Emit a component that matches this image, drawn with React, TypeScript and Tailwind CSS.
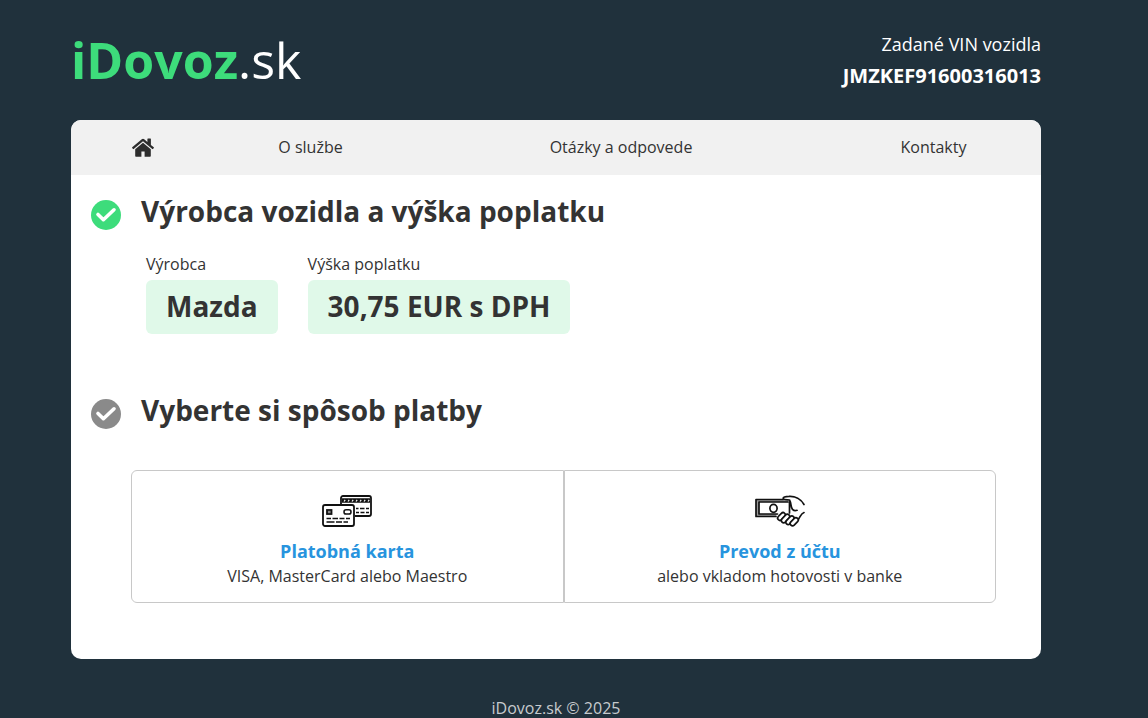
const navLinks = ['O službe', 'Otázky a odpovede', 'Kontakty'];

const vehicle = [
  { label: 'Výrobca', value: 'Mazda' },
  { label: 'Výška poplatku', value: '30,75 EUR s DPH' },
];

const payments = [
  {
    title: 'Platobná karta',
    text: 'VISA, MasterCard alebo Maestro',
    icon: CardsIcon,
    shape: 'rounded-l-md',
  },
  {
    title: 'Prevod z účtu',
    text: 'alebo vkladom hotovosti v banke',
    icon: CashIcon,
    shape: 'rounded-r-md',
  },
];

export default function App() {
  return (
    <div className="min-h-screen bg-[#20313c] pr-9 text-base text-[#333] font-['Open_Sans','Noto_Sans',sans-serif]">
      <div className="max-w-[970px] mx-auto">
        {/* Header */}
        <header className="flex justify-between text-white pt-7 pb-7">
          <a href="#" className="text-[50px] leading-[64px]">
            <span className="font-bold text-[#3ddc7b]">iDovoz</span>.sk
          </a>
          <div className="text-right">
            <p className="text-lg leading-8">Zadané VIN vozidla</p>
            <p className="text-xl leading-8 font-bold">JMZKEF91600316013</p>
          </div>
        </header>

        <main className="bg-white rounded-[10px] overflow-hidden pb-14">
          {/* Navigation */}
          <nav className="grid grid-cols-[144fr_191fr_430fr_195fr] h-[55px] items-center text-center bg-[#f1f1f1] pr-[10px] pb-0.5">
            <a href="#" aria-label="Domov" className="flex justify-center pt-0.5">
              <HomeIcon />
            </a>
            {navLinks.map((link) => (
              <a key={link} href="#">{link}</a>
            ))}
          </nav>

          {/* Vehicle and fee */}
          <section className="pt-5 px-5">
            <StepTitle done>Výrobca vozidla a výška poplatku</StepTitle>
            <dl className="flex flex-wrap gap-[30px] pt-[22px] pl-[55px]">
              {vehicle.map((item) => (
                <div key={item.label}>
                  <dt className="leading-6">{item.label}</dt>
                  <dd className="mt-1 px-5 pt-[7px] pb-[9px] bg-[#e0f9e9] rounded-md text-[28px] leading-[38px] font-bold">
                    {item.value}
                  </dd>
                </div>
              ))}
            </dl>
          </section>

          {/* Payment method */}
          <section className="pt-[60px] px-5">
            <StepTitle>Vyberte si spôsob platby</StepTitle>
            <div className="grid grid-cols-2 mt-[41px] ml-10 mr-[25px]">
              {payments.map(({ title, text, icon: Icon, shape }) => (
                <a
                  key={title}
                  href="#"
                  className={`flex flex-col items-center border border-[#c8c8c8] pt-6 pb-[14px] text-center ${shape}`}
                >
                  <Icon />
                  <span className="mt-[11px] text-lg leading-[26px] font-bold text-[#2794de]">{title}</span>
                  <span className="leading-6">{text}</span>
                </a>
              ))}
            </div>
          </section>
        </main>

        <footer className="pt-[39px] text-center leading-5 text-[#c7cbce]">iDovoz.sk © 2025</footer>
      </div>
    </div>
  );
}

function StepTitle({ done = false, children }: { done?: boolean; children: string }) {
  return (
    <div className="flex gap-5">
      <svg viewBox="0 0 30 30" className="size-[30px] mt-[5px] shrink-0">
        <circle cx="15" cy="15" r="15" fill={done ? '#3ddc7b' : '#8a8a8a'} />
        <path
          d="M7 14.5l5.4 5.2L23 9.8"
          fill="none"
          stroke="#fff"
          strokeWidth="3.6"
          strokeLinecap="round"
          strokeLinejoin="round"
        />
      </svg>
      <h2 className="text-[28px] leading-[33px] font-bold">{children}</h2>
    </div>
  );
}

function HomeIcon() {
  return (
    <svg viewBox="0 0 22 19" className="w-[22px] h-[19px]" fill="#2d2d2d">
      <path d="M11 4.8L3.2 11.2v6.6c0 .6.4 1 1 1h5.2v-5.4h3.2v5.4h5.2c.6 0 1-.4 1-1v-6.600z" />
      <path d="M21.8 9.3L18.9 6.9V1.1c0-.3-.2-.5-.5-.5h-2.5c-.3 0-.5.2-.5.5v2.800L12.2 1.200a1.900 1.900 0 0 0-2.400 0L.2 9.300c-.2.200-.2.500 0 .7l.8 1c.2.200.5.200.7 0L11 3.200l9.300 7.800c.2.200.5.200.7 0l.8-1c.2-.2.2-.5 0-.7z" />
    </svg>
  );
}

function CardsIcon() {
  return (
    <svg viewBox="0 0 50 32" className="w-[50px] h-8" fill="none" stroke="#111" strokeWidth="1.8">
      <path d="M19 9V3a2 2 0 0 1 2-2h26a2 2 0 0 1 2 2v16a2 2 0 0 1-2 2H33" />
      <path d="M20 5.5h28" strokeWidth="4.5" />
      <path
        d="M22 6.500l1.200-1.600M26 6.500l1.200-1.600M30 6.500l1.200-1.600M34 6.500l1.200-1.600M38 6.500l1.200-1.600M42 6.500l1.200-1.600M46 6.500l1.200-1.600"
        stroke="#fff"
        strokeWidth="1.2"
      />
      <path d="M34 13.500h2.500m1.500 0h4.500m1.500 0h3M34 17.500h3m1.500 0h4m1.500 0h3" strokeWidth="1.500" />
      <rect x="1" y="10" width="31" height="21" rx="2" fill="#fff" />
      <rect x="5" y="15" width="4.500" height="4" />
      <path d="M5 17h4.500" strokeWidth="1" />
      <rect x="22" y="14.800" width="7" height="4.200" rx="2.100" strokeWidth="1.500" />
      <path d="M4.500 23.500H9m1.500 0H16m1.500 0h5m1.500 0h4M4.500 27h8m1.500 0h6m1.500 0H26" strokeWidth="1.600" />
    </svg>
  );
}

function CashIcon() {
  return (
    <svg
      viewBox="0 0 50 32"
      className="w-[50px] h-8"
      fill="none"
      stroke="#111"
      strokeWidth="1.7"
      strokeLinecap="round"
      strokeLinejoin="round"
    >
      <path d="M1 4.500h29L34.500 7H4v12h18l-1 2.500H1z" fill="#999" stroke="none" />
      <path d="M21 21.500H1V4.500h27" />
      <path d="M22.500 19H4V7h29" />
      <ellipse cx="18.500" cy="13.300" rx="3.600" ry="4" />
      <path d="M49 9.500C46 4 40 1 34 1.400c-4 .1-6 .8-5.800 2C28.500 5 32 4.600 34.500 5c2.300 4 .8 7 3 9.300 1.300 1.400 3 1.500 4.500 1M34.500 7v11" />
      <path d="M49 17.500c-3.500 1.200-3.800 5-6.300 7.800" />
      <g fill="#fff">
        <rect x="22" y="19.200" width="9" height="4.600" rx="2.300" transform="rotate(-46 26.500 21.500)" />
        <rect x="25.500" y="21.200" width="10" height="4.600" rx="2.300" transform="rotate(-46 30.500 23.500)" />
        <rect x="30" y="23" width="10" height="4.600" rx="2.300" transform="rotate(-46 35 25.300)" />
        <rect x="34.500" y="24.500" width="9.500" height="4.600" rx="2.300" transform="rotate(-46 39.200 26.800)" />
      </g>
    </svg>
  );
}
